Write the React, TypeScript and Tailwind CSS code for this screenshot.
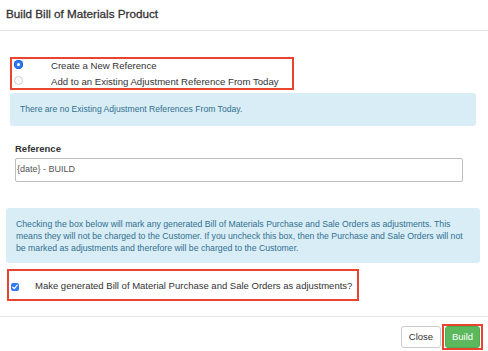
const Radio = ({ checked }: { checked: boolean }) =>
  checked ? (
    <span className="flex h-[9px] w-[9px] shrink-0 items-center justify-center rounded-full bg-[#2f7cf6] shadow-[inset_0_0_0_1px_#1f66db]">
      <span className="h-[3px] w-[3px] rounded-full bg-white" />
    </span>
  ) : (
    <span className="block h-[9px] w-[9px] shrink-0 rounded-full border border-[#d0d0d0] bg-[#fafafa]" />
  );

const App: React.FC = () => {
  return (
    <div className="h-[351px] w-[488px] overflow-hidden bg-white font-['Liberation_Sans',Arial,sans-serif] text-[#333]">
      {/* header */}
      <div className="flex h-[31px] items-center border-b border-[#e5e5e5] px-[6px] pb-[3px]">
        <h4 className="text-[11.7px] font-normal text-[#333] [-webkit-text-stroke:0.3px_#333]">
          Build Bill of Materials Product
        </h4>
      </div>

      {/* body */}
      <div className="mt-[26px] ml-[10px] h-[33px] w-[284px] border-2 border-[#e8442f]">
        <div className="flex h-[13px] items-center text-[9.6px] leading-[13px]">
          <span className="ml-[2px] -mt-[3px] flex w-[9px] shrink-0">
            <Radio checked />
          </span>
          <span className="ml-[28px]">Create a New Reference</span>
        </div>
        <div className="mt-[3px] flex h-[13px] items-center text-[9.6px] leading-[13px]">
          <span className="ml-[2px] -mt-[3px] flex w-[9px] shrink-0">
            <Radio checked={false} />
          </span>
          <span className="ml-[28px]">Add to an Existing Adjustment Reference From Today</span>
        </div>
      </div>

      <div className="mt-[3px] ml-[10px] mr-[12px] flex h-[33px] items-center rounded-[3px] bg-[#d9edf7] pl-[10px] text-[8.6px] text-[#31708f]">
        There are no Existing Adjustment References From Today.
      </div>

      <div className="mt-[17px] ml-[15px] text-[9.5px] font-bold leading-[12px]">Reference</div>
      <div className="mt-[3px] ml-[15px] flex h-[24px] w-[448px] items-center rounded-[2px] border border-[#bdbdbd] pl-[1px] text-[9px] text-[#555]">
        {"{date} - BUILD"}
      </div>

      <div className="mt-[26px] ml-[6px] mr-[8px] h-[55px] rounded-[3px] bg-[#d9edf7] px-[10px] pt-[10px] text-[8.7px] leading-[12px] whitespace-nowrap text-[#31708f]">
        Checking the box below will mark any generated Bill of Materials Purchase and Sale Orders as adjustments. This
        <br />
        means they will not be charged to the Customer. If you uncheck this box, then the Purchase and Sale Orders will not
        <br />
        be marked as adjustments and therefore will be charged to the Customer.
      </div>

      <div className="mt-[6px] ml-[7px] flex h-[32px] w-[352px] items-center border-2 border-[#e8442f] pt-[3px]">
        <span className="ml-[2px] flex h-[8px] w-[8px] items-center justify-center rounded-[2px] bg-[#2f7cf6]">
          <svg viewBox="0 0 8 8" className="h-[8px] w-[8px]">
            <path d="M1.8 4.2 L3.3 5.6 L6.2 2.2" fill="none" stroke="white" strokeWidth="1.3" strokeLinecap="round" strokeLinejoin="round" />
          </svg>
        </span>
        <span className="ml-[16px] text-[9.5px] text-[#333]">
          Make generated Bill of Material Purchase and Sale Orders as adjustments?
        </span>
      </div>

      {/* footer */}
      <div className="mt-[15px] flex h-[35px] items-start justify-end border-t border-[#e5e5e5] pr-[5px] pt-[7px]">
        <button className="mt-[2px] flex h-[22px] w-[40px] items-center justify-center rounded-[3px] border border-[#ccc] bg-white text-[9.5px] text-[#333]">
          Close
        </button>
        <div className="ml-[1px] flex h-[26px] w-[41px] items-center justify-center border-2 border-[#e8442f]">
          <button className="flex h-[22px] w-[35px] items-center justify-center rounded-[3px] border border-[#4cae4c] bg-[#5cb85c] text-[9.5px] text-white">
            Build
          </button>
        </div>
      </div>
    </div>
  );
};

export default App;
